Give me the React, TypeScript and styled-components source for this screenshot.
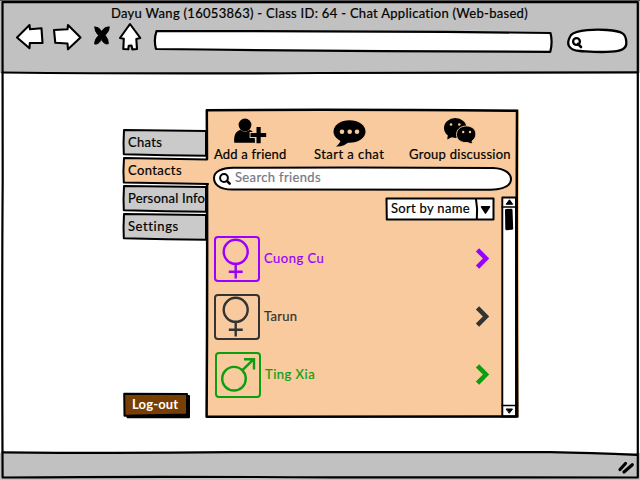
import React from "react";
import styled, { createGlobalStyle } from "styled-components";

const PEACH = "#f8ca9d";
const CHROME = "#c1c1c1";

const GlobalStyle = createGlobalStyle`
  * { box-sizing: border-box; }
  html, body { margin: 0; padding: 0; background: #fff; }
  button, input { font: inherit; color: inherit; border: 0; background: none; padding: 0; margin: 0; }
`;

const Window = styled.div`
  position: relative;
  display: flex;
  flex-direction: column;
  width: 640px;
  height: 480px;
  overflow: hidden;
  background: #fff;
  font-family: Lato, "Open Sans", sans-serif;
  font-size: 13px;
  line-height: 16px;
  color: #000;
`;

/* Hand-drawn outline lying over or under the part it belongs to */
const Ink = styled.svg<{ $front?: boolean }>`
  position: absolute;
  inset: 0;
  width: 100%;
  height: 100%;
  overflow: visible;
  pointer-events: none;
  z-index: ${(p) => (p.$front ? 2 : 0)};
  fill: none;
  stroke: #000;
  stroke-width: 2;
  stroke-linejoin: round;
  stroke-linecap: round;
`;

const Text = styled.span<{ $track?: number; $color?: string; $bold?: boolean }>`
  position: relative;
  z-index: 1;
  white-space: nowrap;
  letter-spacing: ${(p) => p.$track ?? 0}px;
  color: ${(p) => p.$color ?? "#000"};
  font-weight: ${(p) => (p.$bold ? 700 : 400)};
  -webkit-text-stroke: ${(p) => (p.$bold ? 0 : 0.2)}px;
`;

const Header = styled.header`
  height: 73px;
  padding: 5px 0 0 16px;
  background: ${CHROME};
`;

const TitleBar = styled.div`
  display: flex;
  padding-left: 95px;
  height: 18px;
`;

const Toolbar = styled.nav`
  display: flex;
  align-items: flex-start;
  height: 30px;
`;

const ToolButton = styled.button<{ $w: number; $gap: number }>`
  display: block;
  width: ${(p) => p.$w}px;
  height: 28px;
  margin-right: ${(p) => p.$gap}px;
`;

const Icon = styled.svg`
  display: block;
  width: 100%;
  height: 100%;
  overflow: visible;
  fill: #fff;
  stroke: #000;
  stroke-width: 2.1;
  stroke-linejoin: round;
  stroke-linecap: round;
`;

const AddressBar = styled.div`
  position: relative;
  width: 398px;
  height: 23px;
  margin: 7px 15px 0 0;
`;

const BrowserSearch = styled.div`
  position: relative;
  width: 60px;
  height: 25px;
  margin-top: 5px;
`;

const Main = styled.main`
  flex: 1;
  display: flex;
  align-items: flex-start;
  padding: 36px 0 0 122px;
`;

const Sidebar = styled.aside`
  display: flex;
  flex-direction: column;
  justify-content: space-between;
  width: 84px;
  height: 309px;
  padding-top: 20px;
`;

const TabList = styled.div`
  display: flex;
  flex-direction: column;
`;

const Tab = styled.button<{ $active?: boolean }>`
  position: relative;
  z-index: ${(p) => (p.$active ? 3 : 1)};
  display: flex;
  align-items: center;
  width: 84px;
  height: 28px;
  padding: 0 0 3px 6px;
`;

const LogoutButton = styled.button`
  position: relative;
  display: flex;
  align-items: center;
  width: 68px;
  height: 26px;
  padding: 0 0 3px 10px;
`;

const Panel = styled.section`
  position: relative;
  z-index: 2;
  display: flex;
  flex-direction: column;
  width: 313px;
  height: 309px;
  padding-top: 9px;
  background: ${PEACH};
`;

const Actions = styled.div`
  display: flex;
  height: 49px;
  padding-left: 8px;
`;

const Action = styled.button<{ $w: number; $gap: number }>`
  display: flex;
  flex-direction: column;
  align-items: flex-start;
  width: ${(p) => p.$w}px;
  margin-right: ${(p) => p.$gap}px;
`;

const ActionIcon = styled.svg<{ $indent: number }>`
  width: 34px;
  height: 28px;
  margin-left: ${(p) => p.$indent}px;
  overflow: visible;
`;

const SearchField = styled.label`
  position: relative;
  display: flex;
  align-items: center;
  width: 299px;
  height: 24px;
  margin-left: 7px;
  padding: 0 0 4px 22px;
`;

const PanelBody = styled.div`
  display: flex;
  flex: 1;
  padding-top: 6px;
`;

const ContactPane = styled.div`
  display: flex;
  flex-direction: column;
  width: 295px;
`;

const SortSelect = styled.button`
  position: relative;
  display: flex;
  align-items: center;
  align-self: flex-end;
  width: 110px;
  height: 24px;
  margin-right: 6px;
  padding: 0 0 2px 6px;
`;

const ContactList = styled.ul`
  margin: 15px 0 0;
  padding: 0 0 0 8px;
  list-style: none;
`;

const Contact = styled.li<{ $shift: number; $color: string }>`
  display: flex;
  align-items: center;
  height: 46px;
  margin-bottom: 12px;
  color: ${(p) => p.$color};
  & > svg:first-child { margin-left: ${(p) => p.$shift}px; margin-right: 4px; }
  & > span { margin-top: -2px; }
`;

const Avatar = styled.svg`
  flex: none;
  width: 46px;
  height: 46px;
  overflow: visible;
  fill: none;
  stroke: currentColor;
  stroke-width: 2.4;
`;

const Chevron = styled.svg`
  width: 16px;
  height: 22px;
  margin-top: -2px;
  margin-left: auto;
  margin-right: 11px;
  overflow: visible;
  fill: none;
  stroke: currentColor;
  stroke-width: 4.6;
`;

const Scrollbar = styled.div`
  position: relative;
  width: 17px;
  height: 221px;
`;

const Footer = styled.footer`
  display: flex;
  justify-content: flex-end;
  height: 27px;
  padding: 7px 5px 0 0;
  background: ${CHROME};
`;

const Grip = styled.svg`
  width: 18px;
  height: 16px;
  stroke: #000;
  stroke-width: 3.2;
  stroke-linecap: round;
  fill: none;
`;

const tabs = [
  { name: "Chats", track: 0.3 },
  { name: "Contacts", track: 0.4 },
  { name: "Personal Info", track: 0.2 },
  { name: "Settings", track: 0.6 },
];

const contacts = [
  { name: "Cuong Cu", color: "#9900ff", male: false, track: 0.5 },
  { name: "Tarun", color: "#333333", male: false, track: 0.3 },
  { name: "Ting Xia", color: "#0a9f0f", male: true, track: 0.5 },
];

function GenderBadge({ male }: { male: boolean }) {
  return (
    <Avatar viewBox="0 0 46 46">
      <rect x="1" y="1" width="44" height="44" rx="3" strokeWidth="2" />
      {male ? (
        <>
          <circle cx="19" cy="26.7" r="11.8" />
          <path d="M27.5 18.2 L38.7 7.2 M29 7.2 H39 V17.5" />
        </>
      ) : (
        <>
          <circle cx="21.7" cy="15.8" r="12" />
          <path d="M21.7 28 V42.5 M14.8 35.7 H28.7" />
        </>
      )}
    </Avatar>
  );
}

export default function App() {
  return (
    <Window>
      <GlobalStyle />
      <Header>
        <TitleBar>
          <Text $track={0.29}>Dayu Wang (16053863) - Class ID: 64 - Chat Application (Web-based)</Text>
        </TitleBar>
        <Toolbar>
          <ToolButton $w={28} $gap={8} aria-label="Back">
            <Icon viewBox="16 23 28 28">
              <path d="M17 37.5 L29.5 25 L30 29.3 L41.5 28.2 L42.5 43 L29.8 43 L29.5 48.3 Z" />
            </Icon>
          </ToolButton>
          <ToolButton $w={30} $gap={12} aria-label="Forward">
            <Icon viewBox="52 23 30 28">
              <path d="M80.5 37.5 L68 25 L67.5 29.3 L54 30 L55.3 42.8 L67.5 43.5 L68 49.3 Z" />
            </Icon>
          </ToolButton>
          <ToolButton $w={16} $gap={8} aria-label="Stop">
            <Icon viewBox="94 23 16 28">
              <path
                d="M94.8 27 Q98.5 26.2 101.5 31.2 Q105 26.4 109.3 26.8 Q109.8 30.5 105.2 35.3 Q108.8 39.5 108.3 43.8 Q104.5 45 101.3 39.6 Q98.3 45 94.6 44 Q94.3 39.5 98.5 35.5 Q94.2 31 94.8 27 Z"
                fill="#000"
                strokeWidth="0.8"
              />
            </Icon>
          </ToolButton>
          <ToolButton $w={24} $gap={12} aria-label="Home">
            <Icon viewBox="118 23 24 28">
              <path d="M130 24 L140.3 38 L136.3 39 L137 49 L132.4 49.4 L131.5 45.5 L128.7 45.8 L128.3 49.3 L123.3 49 L123.8 38.8 L120 38 Z" />
            </Icon>
          </ToolButton>
          <AddressBar>
            <Ink viewBox="154 30 398 23">
              <path d="M157 31.2 Q350 30.5 550.5 33 Q552.8 42 550.3 51.8 Q350 51.5 156 49 Q153.5 40 156.5 31.2 Z" fill="#fff" strokeWidth="2.2" />
            </Ink>
          </AddressBar>
          <BrowserSearch>
            <Ink viewBox="567 28 60 25">
              <path d="M571 35 C576 29.5 597 29.2 607 30 C623 31 626 34 626.3 42 C627 49 621 51 611 51.6 C600 52.7 589 51.5 580 51 C567 50 566 43 571 35 Z" fill="#fff" strokeWidth="2.3" />
              <circle cx="576.5" cy="41.5" r="3.4" strokeWidth="2.3" />
              <path d="M578 44 L581 47" strokeWidth="2.6" />
            </Ink>
          </BrowserSearch>
        </Toolbar>
      </Header>

      <Main>
        <Sidebar>
          <TabList>
            {tabs.map((tab, i) => (
              <Tab key={tab.name} $active={i === 1}>
                <Ink viewBox="0 0 84 28">
                  {i === 1 ? (
                    <>
                      <path d="M1.5 1 L87 2.5 V27 L45 26.8 L1.5 25.5 Z" fill={PEACH} stroke="none" />
                      <path d="M85 2.5 Q45 1.8 2 1 Q1 14 1.8 25.5 Q45 26.2 60 26.6 L86 27" />
                    </>
                  ) : (
                    <path d="M84 2 Q45 1.5 2 1 Q1.2 14 1.8 25.3 Q45 26.5 84 26.8 Z" fill="#cacaca" />
                  )}
                </Ink>
                <Text $track={tab.track}>{tab.name}</Text>
              </Tab>
            ))}
          </TabList>
          <LogoutButton>
            <Ink viewBox="122 392 68 26">
              <path d="M127.5 396 H189 V417.3 H127.5 Z" fill="#000" />
              <path d="M124.2 393.8 L187 394 V414.5 L124.5 415.8 Z" fill="#783f04" />
            </Ink>
            <Text $track={0.15} $color="#fff" $bold>Log-out</Text>
          </LogoutButton>
        </Sidebar>

        <Panel>
          <Ink viewBox="206 109 313 309" $front>
            <path d="M207 110.2 Q350 109.2 517 110.8 Q516.3 260 517.3 416.6 Q350 416.2 206.6 416.8 Q207.6 260 206.8 110.2" strokeWidth="2.5" />
          </Ink>
          <Actions>
            <Action $w={72} $gap={28}>
              <ActionIcon viewBox="233 118 34 28" $indent={19}>
                <circle cx="245" cy="125" r="6.4" />
                <path d="M234.3 142.8 C233.3 134 237 130.5 240.5 130 Q245 133.5 249.5 130 C253 130.5 255 134 255 142.8 Z" />
                <path d="M258.6 126 V143.8 M249.6 135 H266.3" stroke={PEACH} strokeWidth="5.8" />
                <path d="M258.6 127 V143.2 M250.5 135 H266.2" stroke="#000" strokeWidth="4.2" />
              </ActionIcon>
              <Text $track={0.2}>Add a friend</Text>
            </Action>
            <Action $w={71} $gap={24}>
              <ActionIcon viewBox="333 118 34 28" $indent={19}>
                <ellipse cx="349.5" cy="131.5" rx="16" ry="11.3" />
                <path d="M341 139 Q340 144 336 146.5 Q344 147 350 141 Z" />
                <g fill={PEACH}>
                  <circle cx="342" cy="131.8" r="2.3" />
                  <circle cx="349.7" cy="131.8" r="2.3" />
                  <circle cx="357" cy="131.8" r="2.3" />
                </g>
              </ActionIcon>
              <Text $track={0.45}>Start a chat</Text>
            </Action>
            <Action $w={102} $gap={0}>
              <ActionIcon viewBox="443 118 34 28" $indent={34}>
                <ellipse cx="455.3" cy="128" rx="11.3" ry="9.9" />
                <path d="M448 134 L447.2 139.5 L453 136.5 Z" />
                <path d="M466.5 126 C460 126 456.5 130 456.5 134.5 C456.5 140 461.5 143 467 142.5 L472.5 144 L472 141 C479 136 476 126 466.5 126 Z" stroke={PEACH} strokeWidth="0.9" />
                <g fill={PEACH}>
                  <circle cx="451" cy="124.5" r="1.3" />
                  <circle cx="459.3" cy="124.5" r="1.3" />
                  <circle cx="463.2" cy="132" r="1.2" />
                  <circle cx="470" cy="132" r="1.2" />
                </g>
              </ActionIcon>
              <Text $track={0.27}>Group discussion</Text>
            </Action>
          </Actions>
          <SearchField>
            <Ink viewBox="213 167 299 24">
              <path d="M233 167.8 Q370 167 493 168 C506 168.5 511 174 511 179 C511 187 502 189.5 490 189.8 Q360 189.8 232 189.6 C219 189.5 214 184 214 178 C214 172 221 168 233 167.8 Z" fill="#fff" />
              <circle cx="224" cy="178" r="3.9" />
              <path d="M227 181 L229.7 183.7" strokeWidth="2.5" />
            </Ink>
            <Text $track={0.35} $color="#777783">Search friends</Text>
          </SearchField>
          <PanelBody>
            <ContactPane>
              <SortSelect>
                <Ink viewBox="385 197 110 24">
                  <path d="M386.5 198.5 L493.5 198.5 V219.4 L386.8 219.6 Z" fill="#fff" />
                  <path d="M476 199 Q477.8 209 476.8 219" />
                  <path d="M481.5 206.8 H489.5 L485.5 213 Z" fill="#000" strokeWidth="1.5" />
                </Ink>
                <Text $track={0.3}>Sort by name</Text>
              </SortSelect>
              <ContactList>
                {contacts.map((c) => (
                  <Contact key={c.name} $color={c.color} $shift={c.male ? 1 : 0}>
                    <GenderBadge male={c.male} />
                    <Text $track={c.track} $color={c.color}>{c.name}</Text>
                    <Chevron viewBox="0 0 16 22">
                      <path d="M3.5 2.8 L12 11.5 L3.5 20.2" />
                    </Chevron>
                  </Contact>
                ))}
              </ContactList>
            </ContactPane>
            <Scrollbar>
              <Ink viewBox="501 197 17 221">
                <path d="M502.3 197.5 H516 V416.5 H502.3 Z" fill="#fff" strokeWidth="1.9" />
                <path d="M502 207 H516 M502 405.5 H516" strokeWidth="1.5" />
                <path d="M506.3 204 L509.5 199.8 L512.5 204 Z M506.5 409 H512.5 L509.5 413 Z" fill="#000" strokeWidth="1" />
                <path d="M506.2 210.3 L511.3 210 L512 228.5 L506.5 229 Z" fill="#000" strokeWidth="2.4" />
              </Ink>
            </Scrollbar>
          </PanelBody>
        </Panel>
      </Main>

      <Footer>
        <Grip viewBox="617 460 18 16">
          <path d="M620 469.5 L625.5 463.5 M624 472 L632.3 464.7" />
        </Grip>
      </Footer>

      <Ink viewBox="0 0 640 480" $front>
        <path d="M0 0.5 H640" stroke="#555" strokeWidth="1" strokeLinecap="butt" />
        <path d="M2.5 2.2 Q320 1.5 637.8 2 Q637 240 637.8 477.5 Q480 478 330 477.4 Q150 476.2 2.6 477.5 Q1.8 300 2.7 180 Z" strokeWidth="2.2" />
        <path d="M2.5 72.5 Q150 74 320 73 T637 72.3" strokeWidth="2.2" />
        <path d="M2.5 452.3 Q120 453.4 230 452.2 Q400 451.7 550 452.2 Q590 453 637 454.8" strokeWidth="2.2" />
      </Ink>
    </Window>
  );
}
